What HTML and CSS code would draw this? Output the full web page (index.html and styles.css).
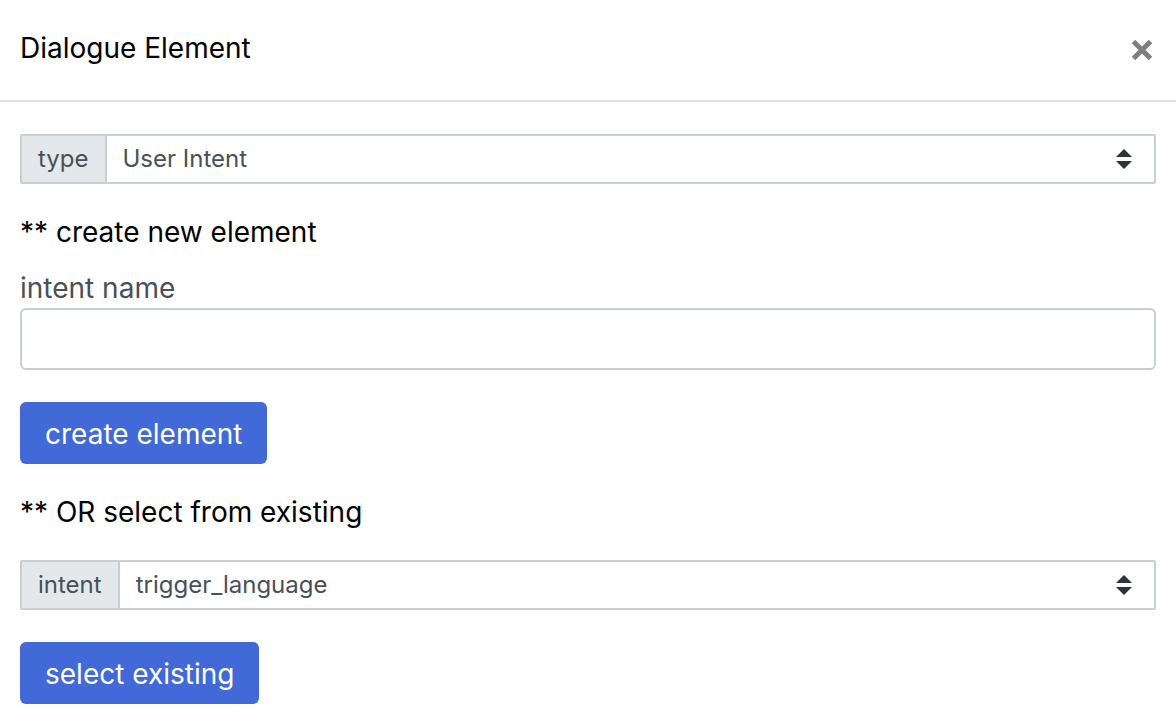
FILE: index.html
```html
<!DOCTYPE html>
<html lang="en">
<head>
<meta charset="utf-8">
<title>Dialogue Element</title>
<link rel="stylesheet" href="styles.css">
</head>
<body>
<section class="dialog" aria-labelledby="dialog-title">
  <header class="dialog-header">
    <h1 class="title" id="dialog-title">Dialogue Element</h1>
    <button class="close" type="button" aria-label="Close">
      <svg class="close-icon" viewBox="0 0 24 24" aria-hidden="true"><path d="M3.5 3.5 20.5 20.5M20.5 3.5 3.5 20.5"/></svg>
    </button>
  </header>
  <form class="dialog-body">
    <div class="input-group">
      <label class="addon" for="type">type</label>
      <div class="select-wrap">
        <select class="select" id="type"><option>User Intent</option></select>
        <svg class="arrows" viewBox="0 0 16 20" aria-hidden="true"><path d="M0 8 8 0 16 8ZM0 12H16L8 20Z"/></svg>
      </div>
    </div>
    <h2 class="subtitle">** create new element</h2>
    <div class="field">
      <label class="label" for="name">intent name</label>
      <input class="input" id="name" type="text">
    </div>
    <button class="button" type="button">create element</button>
    <h2 class="subtitle">** OR select from existing</h2>
    <div class="input-group">
      <label class="addon" for="intent">intent</label>
      <div class="select-wrap">
        <select class="select" id="intent"><option>trigger_language</option></select>
        <svg class="arrows" viewBox="0 0 16 20" aria-hidden="true"><path d="M0 8 8 0 16 8ZM0 12H16L8 20Z"/></svg>
      </div>
    </div>
    <button class="button" type="button">select existing</button>
  </form>
</section>
</body>
</html>
```
FILE: styles.css
```css
* { box-sizing: border-box; }
body { margin: 0; background: #fff; color: #000; font-family: Inter, sans-serif; font-size: 28px; line-height: 32px; }
.dialog-header { display: flex; align-items: center; justify-content: space-between; padding: 32px 20px 36px; border-bottom: 2px solid #dbe0e4; }
.title, .subtitle { margin: 0; font-size: 28px; font-weight: 400; line-height: 32px; }
.close { display: flex; padding: 4px 2px 0; border: 0; background: none; }
.close-icon { width: 24px; height: 24px; fill: none; stroke: #7f7f7f; stroke-width: 5; }
.dialog-body { display: flex; flex-direction: column; align-items: flex-start; gap: 32px; padding: 32px 20px 24px; }
.input-group { display: flex; width: 100%; height: 50px; border: 2px solid #c8ced5; border-radius: 2px; color: #495057; font-size: 24px; }
.addon { display: flex; align-items: center; padding: 0 16px; background: #e4e8eb; border-right: 2px solid #c8ced5; }
.select-wrap { position: relative; flex: 1; display: flex; }
.select { width: 100%; padding: 0 48px 0 16px; border: 0; appearance: none; background: #fff; color: #495057; font: inherit; }
.arrows { position: absolute; top: 50%; right: 22px; width: 16px; height: 20px; transform: translateY(-50%); fill: #2b333b; pointer-events: none; }
.field { display: flex; flex-direction: column; width: 100%; gap: 4px; margin-top: -8px; }
.label { color: #495057; }
.input { width: 100%; height: 62px; padding: 8px 24px; border: 2px solid #c8ced5; border-radius: 6px; font: inherit; }
.button { height: 62px; padding: 2px 25px 0; border: 0; border-radius: 6px; background: #4169d8; color: #fff; font: inherit; }
```
